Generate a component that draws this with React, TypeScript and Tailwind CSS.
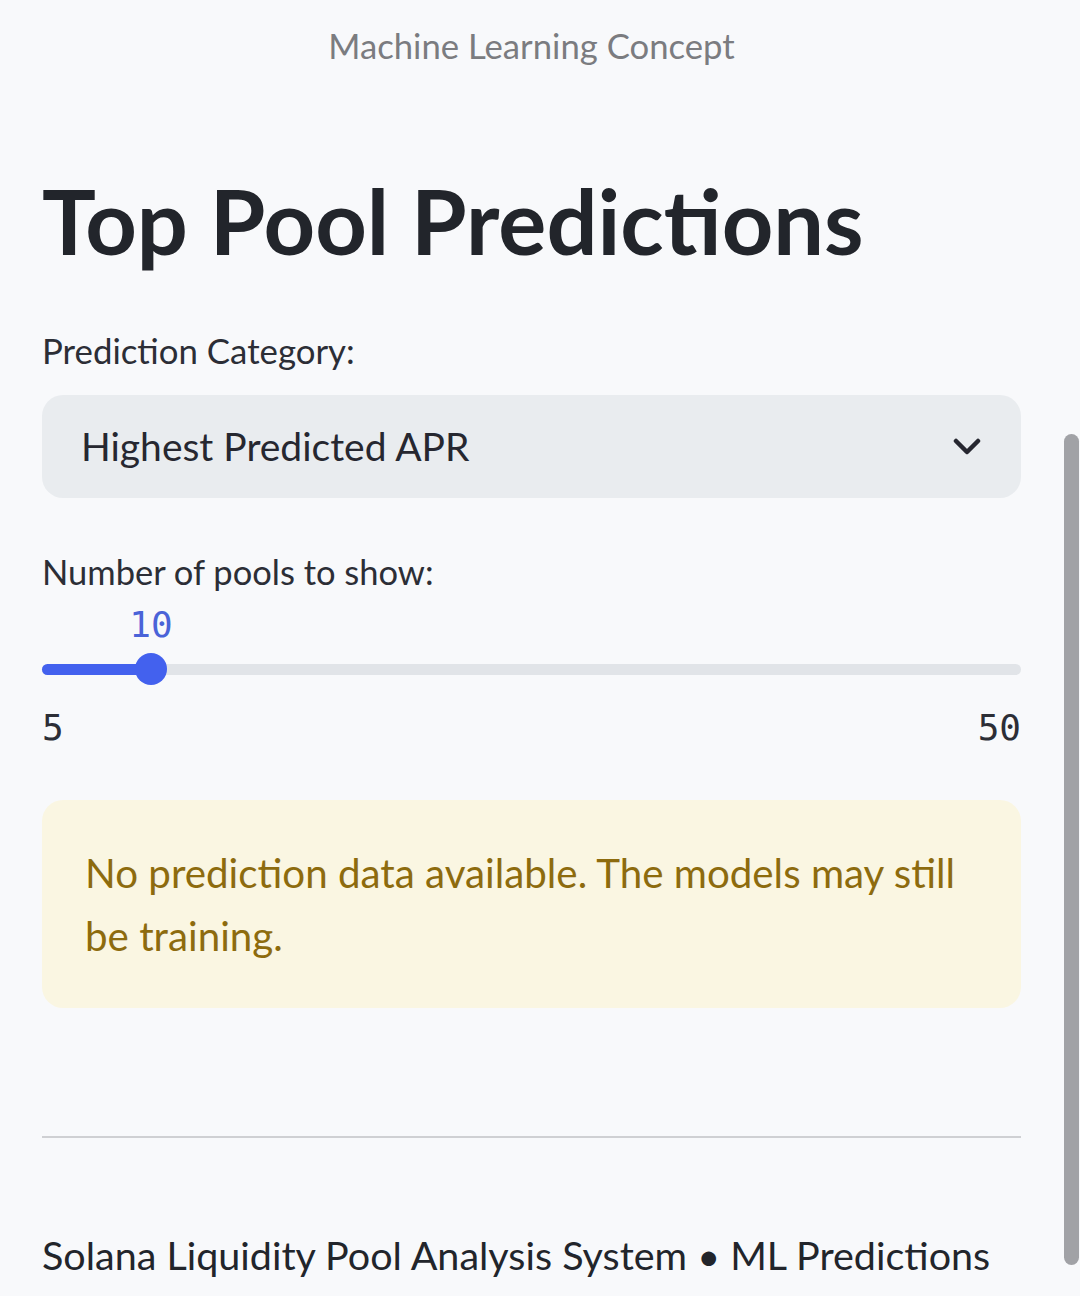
import React from "react";

export default function App() {
  return (
    <div
      className="relative h-[1296px] w-full overflow-hidden bg-[#f8f9fb]"
      style={{ fontFamily: "Lato, 'Noto Sans', sans-serif" }}
    >
      <div className="flex flex-col px-[42px] pr-[59px]">
        <div className="flex h-[92px] items-center justify-center text-[34.7px] text-[#7b7c80]">
          Machine Learning Concept
        </div>

        <h1 className="mt-[75px] text-[90px] font-bold leading-[106px] text-[#22252b]">
          Top Pool Predictions
        </h1>

        <div className="mt-[56px] text-[34.8px] leading-[44px] text-[#2c2e36]">
          Prediction Category:
        </div>

        <div className="mt-[22px] flex h-[103px] items-center justify-between rounded-[21px] bg-[#e9ecef] pl-[39px] pr-[40px]">
          <span className="text-[39px] text-[#262730]">Highest Predicted APR</span>
          <svg width="28" height="18" viewBox="0 0 28 18" fill="none">
            <polyline
              points="3,3 14,14 25,3"
              stroke="#262730"
              strokeWidth="4.5"
              strokeLinecap="round"
              strokeLinejoin="round"
            />
          </svg>
        </div>

        <div className="mt-[52px] text-[34.5px] leading-[44px] text-[#2c2e36]">
          Number of pools to show:
        </div>

        <div className="relative mt-[11px] h-[40px]">
          <span
            className="absolute top-0 left-[84px] w-[50px] text-center text-[36px] leading-[40px] text-[#4a63d8]"
            style={{ fontFamily: "'DejaVu Sans Mono', 'Liberation Mono', monospace" }}
          >
            10
          </span>
        </div>

        <div className="relative mt-[8px] flex h-[32px] items-center">
          <div className="h-[11px] w-full rounded-full bg-[#e1e4e8]" />
          <div className="absolute left-0 top-[10.5px] h-[11px] w-[110px] rounded-full bg-[#4361ee]" />
          <div className="absolute left-[93px] top-0 h-[32px] w-[32px] rounded-full bg-[#4361ee]" />
        </div>

        <div
          className="mt-[23px] flex h-[40px] items-center justify-between text-[36px] text-[#2c2e36]"
          style={{ fontFamily: "'DejaVu Sans Mono', 'Liberation Mono', monospace" }}
        >
          <span>5</span>
          <span>50</span>
        </div>

        <div className="mt-[52px] rounded-[21px] bg-[#faf6e2] px-[43px] pt-[41px] pb-[41px] text-[40.3px] leading-[63px] text-[#8d6b0e]">
          No prediction data available. The models may still be training.
        </div>

        <div className="mt-[128px] h-[2px] w-full bg-[#cfd0d3]" />

        <div className="mt-[92px] text-[39.5px] leading-[50px] text-[#22252b]">
          Solana Liquidity Pool Analysis System • ML Predictions
        </div>
      </div>

      <div className="absolute right-[1px] top-[434px] h-[831px] w-[15px] rounded-full bg-[#a1a2a6]" />
    </div>
  );
}
